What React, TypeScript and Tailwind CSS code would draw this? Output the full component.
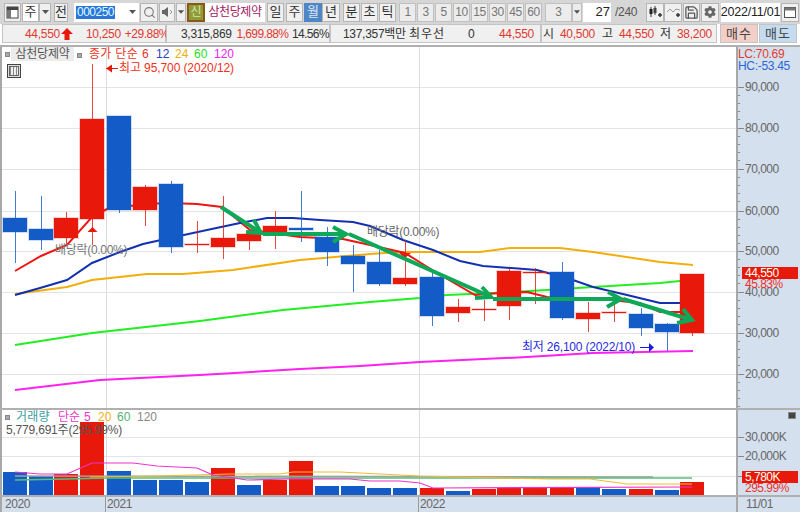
import React from "react";
import { Search, Save } from "lucide-react";
import { FaCog } from "react-icons/fa";

const RED = "#e8190a";
const BLUE = "#135cc8";

// x center, open-top, body-bottom, wick-top, wick-bottom, colour
type C = [number, number, number, number, number, "r" | "b"];
const candles: C[] = [
  [15, 218, 232, 191, 263, "b"],
  [41, 229, 240, 196, 250, "b"],
  [66, 218, 238, 212, 245, "r"],
  [92, 119, 219, 64, 245, "r"],
  [119, 116, 210, 116, 213, "b"],
  [145, 187, 210, 185, 226, "r"],
  [171, 184, 247, 181, 253, "b"],
  [197, 244, 245, 221, 253, "r"],
  [223, 238, 247, 196, 259, "r"],
  [249, 234, 241, 234, 250, "r"],
  [275, 226, 233, 211, 249, "r"],
  [301, 228, 230, 191, 242, "b"],
  [327, 237, 252, 227, 266, "b"],
  [353, 256, 264, 245, 292, "b"],
  [379, 262, 284, 250, 286, "b"],
  [405, 278, 284, 240, 286, "r"],
  [432, 277, 316, 273, 326, "b"],
  [458, 307, 313, 299, 322, "r"],
  [484, 309, 310, 300, 321, "r"],
  [509, 271, 306, 268, 320, "r"],
  [535, 272, 273, 268, 304, "r"],
  [562, 272, 318, 262, 320, "b"],
  [588, 313, 319, 302, 332, "r"],
  [614, 312, 313, 301, 322, "r"],
  [641, 314, 328, 308, 336, "b"],
  [667, 324, 332, 323, 351, "b"],
  [692, 274, 333, 274, 336, "r"],
];

const vols: [number, number, "r" | "b"][] = [
  [15, 472, "b"], [41, 476, "b"], [66, 474, "r"], [92, 422, "r"], [119, 471, "b"], [145, 480, "b"],
  [171, 480, "b"], [197, 482, "b"], [223, 468, "r"], [249, 485, "b"], [275, 480, "r"], [301, 461, "r"],
  [327, 486, "b"], [353, 486, "b"], [379, 488, "b"], [405, 488, "b"], [432, 488, "r"], [458, 491, "b"],
  [484, 489, "r"], [509, 488, "r"], [535, 488, "r"], [562, 487, "r"], [588, 487, "b"], [614, 489, "b"],
  [641, 489, "r"], [667, 490, "b"], [692, 482, "r"],
];

const maRed = "15,271 41,256 67,245 92,217 107,209 145,204 170,203 197,204 222,207 250,230 300,237 343,239 370,245 405,253 437,273 475,295 500,293 527,292 547,297 600,299 640,303 660,312 680,312";
const maNavy = "15,295 40,288 67,280 92,263 120,252 143,244 170,238 207,230 240,223 267,218 293,218 320,220 353,222 370,226 403,240 433,250 460,261 483,266 537,270 573,280 593,287 627,295 660,303 680,303";
const maOrange = "15,294 67,287 92,280 147,274 183,274 233,270 300,260 370,254 400,252 480,252 510,248 560,248 593,252 660,262 693,265";
const maGreen = "15,345 92,333 119,330 200,321 283,310 370,302 420,298 447,295 493,293 547,290 593,287 660,283 680,281 693,280";
const maPink = "15,390 100,380 200,375 300,369 360,366 420,362 527,357 593,353 693,351";

const arrows: { line: string; head: string }[] = [
  { line: "221,207 261,233", head: "246,232 261,233 254,220" },
  { line: "263,234 346,234", head: "333,227 346,234 333,242" },
  { line: "349,234 491,297", head: "475,298 491,297 482,287" },
  { line: "493,299 621,299", head: "608,292 621,299 607,307" },
  { line: "623,299 692,320", head: "677,323 692,320 683,309" },
];

const Caret = () => (
  <svg width="9" height="6" viewBox="0 0 9 6"><path d="M1 1h7L4.500 5z" fill="#555" /></svg>
);

const Btn = ({ className = "", look = "bg-[#f0f0f0] border-[#b5b5b5] text-[#333]", children }: { className?: string; look?: string; children?: React.ReactNode }) => (
  <div className={`h-[19px] flex items-center justify-center shrink-0 border ${look} ${className}`}>
    {children}
  </div>
);

const GRAY_LOOK = "bg-[#ececec] border-[#c0c0c0] text-[#777]";

const Num = ({ n, cls = "ml-[1px]" }: { n: string; cls?: string }) => (
  <Btn look={GRAY_LOOK} className={`w-[17px] text-[12px] tracking-[-0.5px] ${cls}`}>{n}</Btn>
);

const Bullet = () => <span className="inline-block w-[5px] h-[5px] bg-[#aaa] border border-[#888] shrink-0" />;

const Tick = ({ label, top }: { label: string; top: string }) => (
  <div className={`absolute left-[7px] ${top} h-[14px] leading-[14px] text-[12px] tracking-[-0.5px] text-[#666] whitespace-nowrap`}>{label}</div>
);

export default function App() {
  return (
    <div className="w-[800px] h-[512px] overflow-hidden bg-white flex flex-col [font-family:'Liberation_Sans','Noto_Sans_CJK_KR',sans-serif] text-[12px]">
      {/* toolbar */}
      <div className="h-[24px] shrink-0 bg-[#d6d6d6] flex items-center pl-[4px]">
        <Btn className="w-[17px]">
          <svg width="13" height="13" viewBox="0 0 13 13"><rect x="1" y="1" width="11" height="11" fill="#fff" stroke="#444" /><rect x="1" y="1" width="11" height="3" fill="#444" /><rect x="1" y="4" width="4" height="8" fill="#777" /></svg>
        </Btn>
        <Btn look="bg-white border-[#b5b5b5] text-[#333]" className="w-[17px] ml-[1px] text-[13px]">주</Btn>
        <Btn className="w-[12px]"><Caret /></Btn>
        <Btn className="w-[14px] ml-[3px] text-[13px]">전</Btn>
        <div className="w-[6px]" />
        <div className="h-[19px] w-[51px] bg-white flex items-center pl-[2px] shrink-0">
          <span className="bg-[#2b74d8] text-[#dff] text-[12px] leading-[13px] tracking-[-0.5px] px-[1px]">000250</span>
        </div>
        <Btn look="bg-white border-white text-[#333]" className="w-[14px]"><Caret /></Btn>
        <Btn className="w-[18px] ml-[1px]"><Search size={13} color="#777" strokeWidth={2} /></Btn>
        <Btn className="w-[16px] ml-[1px]">
          <svg width="13" height="12" viewBox="0 0 13 12"><path d="M1 4h2l4-3v10L3 8H1z" fill="#666" /><path d="M9 4l2 2-2 2" stroke="#999" fill="none" /></svg>
        </Btn>
        <Btn className="w-[10px] ml-[1px]"><Caret /></Btn>
        <div className="w-[18px] h-[19px] ml-[1px] shrink-0 flex items-center justify-center border-2 border-[#8a5a14] bg-[#8f9a3a] text-[#cfe8a0] text-[12px]">신</div>
        <div className="w-[60px] h-[19px] shrink-0 bg-white flex items-center justify-center text-[#a3205f] text-[12px] tracking-[-0.4px] whitespace-nowrap overflow-hidden">삼천당제약</div>
        <Btn className="w-[17px] ml-[2px] text-[13px]">일</Btn>
        <Btn className="w-[17px] ml-[2px] text-[13px]">주</Btn>
        <Btn look="bg-[#4f86c6] border-[#4f86c6] text-[#dbe8f8]" className="w-[18px] ml-[1px] text-[13px]">월</Btn>
        <Btn className="w-[18px] text-[13px]">년</Btn>
        <Btn className="w-[17px] ml-[3px] text-[13px]">분</Btn>
        <Btn className="w-[17px] ml-[1px] text-[13px]">초</Btn>
        <Btn className="w-[17px] ml-[1px] text-[13px]">틱</Btn>
        <Num n="1" cls="ml-[3px]" />
        <Num n="3" />
        <Num n="5" />
        <Num n="10" />
        <Num n="15" />
        <Num n="30" />
        <Num n="45" />
        <Num n="60" />
        <Btn look={GRAY_LOOK} className="w-[27px] ml-[3px]">3</Btn>
        <Btn look={GRAY_LOOK} className="w-[10px]"><Caret /></Btn>
        <div className="w-[28px] h-[19px] ml-[1px] shrink-0 bg-white flex items-center justify-end pr-[1px] text-[13px] text-[#222]">27</div>
        <div className="w-[24px] ml-[4px] shrink-0 text-[#555] text-[12px] tracking-[-0.3px]">/240</div>
        <Btn className="w-[18px] ml-[7px]">
          <svg width="15" height="13" viewBox="0 0 15 13"><path d="M3 1v10M7 0v9" stroke="#333" /><rect x="1.500" y="3" width="3" height="5" fill="#222" /><rect x="5.500" y="2" width="3" height="5" fill="#444" /><path d="M10 9h4M12 7v4" stroke="#333" strokeWidth="1.500" /></svg>
        </Btn>
        <Btn className="w-[18px]">
          <svg width="15" height="13" viewBox="0 0 15 13"><path d="M1 6l3-3 3 3 3-3 4 1" stroke="#999" fill="none" /><path d="M10 9h4M12 7v4" stroke="#333" strokeWidth="1.500" /></svg>
        </Btn>
        <Btn className="w-[17px] ml-[1px]"><Save size={15} color="#555" strokeWidth={2} /></Btn>
        <Btn className="w-[18px] ml-[1px]"><FaCog size={12} color="#666" /></Btn>
        <div className="w-[59px] h-[19px] ml-[2px] shrink-0 bg-white flex items-center justify-center text-[12.500px] text-[#222] tracking-[-0.2px] whitespace-nowrap">2022/11/01</div>
        <Btn className="w-[18px] ml-[1px]">
          <svg width="12" height="11" viewBox="0 0 12 11"><rect x="0.500" y="0.500" width="11" height="10" fill="#fff" stroke="#555" /><rect x="0.500" y="0.500" width="11" height="3" fill="#777" /></svg>
        </Btn>
      </div>

      {/* quote bar */}
      <div className="h-[21px] shrink-0 bg-white flex items-start pl-[2px] text-[12px] tracking-[-0.3px] whitespace-nowrap">
        <div className="w-[164px] h-[19px] flex items-center bg-[#f0f0f0] border border-[#c4c4c4] text-[#e03a30] shrink-0">
          <span className="ml-[22px] w-[35px]">44,550</span>
          <svg width="12" height="12" viewBox="0 0 12 12" className="ml-[1px] shrink-0"><path d="M6 0l6 6H8.500v6h-5V6H0z" fill="#e8190a" /></svg>
          <span className="ml-[13px] w-[35px]">10,250</span>
          <span className="ml-[4px] tracking-[-0.5px]">+29.88%</span>
        </div>
        <div className="w-[164px] h-[19px] flex items-center bg-[#f0f0f0] border border-[#c4c4c4] text-[#333] shrink-0">
          <span className="ml-[14px] w-[56px]">3,315,869</span>
          <span className="w-[56px] text-[#e03a30] tracking-[-0.6px]">1,699.88%</span>
          <span className="tracking-[-0.6px]">14.56%</span>
        </div>
        <div className="w-[211px] h-[19px] flex items-center bg-[#f0f0f0] border border-[#c4c4c4] text-[#333] shrink-0">
          <span className="ml-[12px] w-[66px]">137,357백만</span>
          <span className="w-[50px] tracking-[1px]">최우선</span>
          <span className="ml-[9px] w-[20px]">0</span>
          <span className="ml-[11px] text-[#e03a30]">44,550</span>
        </div>
        <div className="w-[176px] h-[19px] flex items-center bg-[#f0f0f0] border border-[#c4c4c4] text-[#333] shrink-0">
          <span className="ml-[1px] w-[17px]">시</span>
          <span className="w-[42px] text-[#e03a30]">40,500</span>
          <span className="w-[17px]">고</span>
          <span className="w-[41px] text-[#e03a30]">44,550</span>
          <span className="w-[17px]">저</span>
          <span className="text-[#e03a30]">38,200</span>
        </div>
        <div className="w-[38px] h-[19px] ml-[3px] shrink-0 flex items-center justify-center bg-[#f4cfc8] border border-[#c4c4c4] text-[#444] text-[13px] tracking-[1px]">매수</div>
        <div className="w-[38px] h-[19px] ml-[1px] shrink-0 flex items-center justify-center bg-[#c5dcf0] border border-[#c4c4c4] text-[#444] text-[13px] tracking-[1px]">매도</div>
      </div>

      {/* price panel */}
      <div className="h-[363px] shrink-0 flex border-t-2 border-[#b0b0b0]">
        <div className="relative w-[736px] shrink-0 border-l-2 border-[#a8a8a8] overflow-hidden">
          <svg width="734" height="361" viewBox="2 47 734 361" className="block">
            {[87, 128, 169, 211, 251, 292, 333, 374].map((y) => (
              <line key={y} x1="0" x2="736" y1={y + 0.5} y2={y + 0.5} stroke="#e4e4e4" />
            ))}
            {[106, 419].map((x) => (
              <line key={x} x1={x + 0.5} x2={x + 0.5} y1="46" y2="410" stroke="#dcdcdc" />
            ))}
            <polyline points={maPink} fill="none" stroke="#ff22ee" strokeWidth="2" />
            <polyline points={maGreen} fill="none" stroke="#22ee22" strokeWidth="2" />
            <polyline points={maOrange} fill="none" stroke="#f2ae0c" strokeWidth="2" />
            <polyline points={maRed} fill="none" stroke="#ef1414" strokeWidth="2" />
            <polyline points={maNavy} fill="none" stroke="#1230b0" strokeWidth="2" />
            {candles.map(([x, t, b, wt, wb, c]) => (
              <g key={x} shapeRendering="crispEdges">
                <line x1={x + 0.5} x2={x + 0.5} y1={wt} y2={wb} stroke={c === "r" ? RED : BLUE} opacity="0.8" />
                <rect x={x - 13} y={t - 1} width="26" height={Math.max(b - t, 1) + 2} fill={c === "r" ? RED : BLUE} opacity="0.2" />
                <rect x={x - 12} y={t} width="24" height={Math.max(b - t, 1)} fill={c === "r" ? RED : BLUE} />
              </g>
            ))}
            <path d="M92.500 227l5 5h-10z" fill={RED} />
            <path d="M399 253h12l-6 5z" fill={RED} />
            {arrows.map((a, i) => (
              <g key={i} fill="none" stroke="#0fa858" strokeWidth="4" strokeLinejoin="miter">
                <polyline points={a.line} />
                <polyline points={a.head} />
              </g>
            ))}
            <path d="M106 68.500h12" stroke={RED} />
            <path d="M106 68.500l6 -4v8z" fill={RED} />
            <path d="M640 347.500h10" stroke="#1a1ae0" />
            <path d="M649 343l5 4.500 -5 4.500z" fill="#1a1ae0" />
          </svg>

          <div className="absolute left-[3px] top-0 flex items-center h-[14px] whitespace-nowrap">
            <Bullet />
            <span className="ml-[1px] w-[63px] h-[14px] leading-[14px] bg-[#ececec] text-[#555] text-center tracking-[-0.2px]">삼천당제약</span>
            <span className="ml-[3px]"><Bullet /></span>
            <span className="ml-[7px] text-[#ee3322] w-[53px] tracking-[0.3px]">종가 단순</span>
            <span className="text-[#e8302a] w-[14px]">6</span>
            <span className="text-[#2a40c0] w-[19px]">12</span>
            <span className="text-[#f2ae0c] w-[19px]">24</span>
            <span className="text-[#22e022] w-[20px]">60</span>
            <span className="text-[#ee22ee]">120</span>
          </div>
          <div className="absolute left-[117px] top-[14px] h-[14px] leading-[14px] text-[#ee3322] whitespace-nowrap tracking-[-0.1px]">최고 95,700 (2020/12)</div>
          <div className="absolute left-[5px] top-[17px] w-[14px] h-[14px] border border-[#444] bg-[#ddd] p-[1px]">
            <div className="w-full h-full border border-[#666] bg-[repeating-linear-gradient(90deg,#888_0,#888_1px,#eee_1px,#eee_3px)]" />
          </div>
          <div className="absolute left-[53px] top-[194px] text-[#777] whitespace-nowrap tracking-[-0.3px]">배당락(0.00%)</div>
          <div className="absolute left-[365px] top-[176px] text-[#666] whitespace-nowrap tracking-[-0.3px]">배당락(0.00%)</div>
          <div className="absolute left-[520px] top-[291px] text-[#2a2ae0] whitespace-nowrap tracking-[-0.2px]">최저 26,100 (2022/10)</div>
        </div>
        <div className="relative flex-1 bg-[#d5e0ee] border-l-2 border-[#a8a8a8]">
          <svg width="6" height="361" viewBox="0 47 6 361" className="absolute left-0 top-0">
            {[87, 128, 169, 211, 251, 292, 333, 374].map((y) => (
              <g key={y} stroke="#888">
                <line x1="0" x2="6" y1={y + 0.5} y2={y + 0.5} />
                <line x1="0" x2="2" y1={y + 8.5} y2={y + 8.5} />
                <line x1="0" x2="2" y1={y + 16.5} y2={y + 16.5} />
                <line x1="0" x2="2" y1={y + 24.5} y2={y + 24.5} />
                <line x1="0" x2="2" y1={y + 32.5} y2={y + 32.5} />
              </g>
            ))}
          </svg>
          <div className="absolute left-0 top-[1px] leading-[12px] text-[12px] tracking-[-0.3px] text-[#e03a30] whitespace-nowrap">LC:70.69</div>
          <div className="absolute left-0 top-[13px] leading-[12px] text-[12px] tracking-[-0.3px] text-[#2a66d8] whitespace-nowrap">HC:-53.45</div>
          <Tick label="90,000" top="top-[33px]" />
          <Tick label="80,000" top="top-[74px]" />
          <Tick label="70,000" top="top-[115px]" />
          <Tick label="60,000" top="top-[157px]" />
          <Tick label="50,000" top="top-[197px]" />
          <Tick label="40,000" top="top-[238px]" />
          <Tick label="30,000" top="top-[279px]" />
          <Tick label="20,000" top="top-[320px]" />
          <div className="absolute left-[4px] top-[220px] w-[56px] h-[12px] bg-[#e8190a] text-[#ffe] leading-[12px] pl-[3px] text-[12px] tracking-[-0.5px]">44,550</div>
          <div className="absolute left-[7px] top-[231px] leading-[12px] text-[#e8302a] text-[12px] tracking-[-0.5px]">45.83%</div>
        </div>
      </div>

      {/* volume panel */}
      <div className="h-[87px] shrink-0 flex border-t-2 border-[#b0b0b0]">
        <div className="relative w-[736px] shrink-0 border-l-2 border-[#a8a8a8] overflow-hidden">
          <svg width="734" height="85" viewBox="2 410 734 85" className="block">
            {[437, 456, 476].map((y) => (
              <line key={y} x1="0" x2="736" y1={y + 0.5} y2={y + 0.5} stroke="#e4e4e4" />
            ))}
            {[106, 419].map((x) => (
              <line key={x} x1={x + 0.5} x2={x + 0.5} y1="410" y2="496" stroke="#dcdcdc" />
            ))}
            {vols.map(([x, t, c]) => (
              <rect key={x} x={x - 12} y={t} width="24" height={495 - t} fill={c === "r" ? RED : BLUE} shapeRendering="crispEdges" />
            ))}
            <polyline points="15,476 653,477" fill="none" stroke="#a0a0a0" strokeWidth="1.500" />
            <polyline points="15,480 67,479 107,478 233,478 692,478" fill="none" stroke="#55c080" strokeWidth="1.500" />
            <polyline points="90,477 157,476 230,474 280,474 293,472 340,472 400,475 420,476 550,479 590,479 627,484 692,484" fill="none" stroke="#f4bb30" strokeWidth="1.200" />
            <polyline points="15,472 40,474 67,474 92,463 133,463 157,466 197,468 213,475 247,480 287,479 350,479 370,481 400,481 420,483 433,488 692,487" fill="none" stroke="#ee33cc" strokeWidth="1.200" />
          </svg>
          <div className="absolute left-[3px] top-0 h-[14px] flex items-center whitespace-nowrap">
            <Bullet />
            <span className="ml-[6px] w-[42px] text-[#3aa0a0] tracking-[0.2px]">거래량</span>
            <span className="w-[26px] text-[#ee33cc]">단순</span>
            <span className="w-[14px] text-[#ee33cc]">5</span>
            <span className="w-[19px] text-[#f4b020]">20</span>
            <span className="w-[20px] text-[#55b070]">60</span>
            <span className="text-[#888]">120</span>
          </div>
          <div className="absolute left-[4px] top-[14px] leading-[13px] text-[#555] whitespace-nowrap tracking-[-0.2px]">5,779,691주(295.99%)</div>
        </div>
        <div className="relative flex-1 bg-[#d5e0ee] border-l-2 border-[#a8a8a8]">
          <svg width="6" height="85" viewBox="0 410 6 85" className="absolute left-0 top-0">
            {[437, 456, 476].map((y) => (
              <line key={y} x1="0" x2="6" y1={y + 0.5} y2={y + 0.5} stroke="#888" />
            ))}
          </svg>
          <div className="absolute left-[50px] top-[2px] w-[8px] h-[7px] bg-[#444] border border-[#888]" />
          <Tick label="30,000K" top="top-[20px]" />
          <Tick label="20,000K" top="top-[39px]" />
          <Tick label="10,000K" top="top-[59px]" />
          <div className="absolute left-[4px] top-[61px] w-[56px] h-[12px] bg-[#e8190a] text-[#ffe] leading-[12px] pl-[3px] text-[12px] tracking-[-0.5px]">5,780K</div>
          <div className="absolute left-[7px] top-[72px] leading-[13px] text-[#e8302a] text-[12px] tracking-[-0.5px]">295.99%</div>
        </div>
      </div>

      {/* time axis */}
      <div className="flex-1 flex border-t-2 border-[#b0b0b0] bg-[#d5e0ee] text-[#666] text-[12px] tracking-[-0.4px] leading-[14px]">
        <div className="w-[105px] pl-[3px] border-l-2 border-[#a8a8a8] shrink-0">2020</div>
        <div className="w-[313px] pl-[1px] border-l border-[#999] shrink-0">2021</div>
        <div className="w-[318px] pl-[1px] border-l border-[#999] shrink-0">2022</div>
        <div className="flex-1 pl-[8px] border-l-2 border-[#a8a8a8]">11/01</div>
      </div>
    </div>
  );
}
